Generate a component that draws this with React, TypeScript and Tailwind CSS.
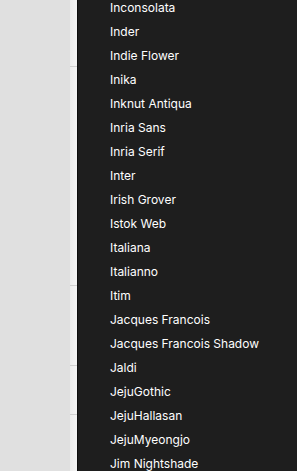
const fonts = [
  'Inconsolata',
  'Inder',
  'Indie Flower',
  'Inika',
  'Inknut Antiqua',
  'Inria Sans',
  'Inria Serif',
  'Inter',
  'Irish Grover',
  'Istok Web',
  'Italiana',
  'Italianno',
  'Itim',
  'Jacques Francois',
  'Jacques Francois Shadow',
  'Jaldi',
  'JejuGothic',
  'JejuHallasan',
  'JejuMyeongjo',
  'Jim Nightshade',
];

export default function App() {
  return (
    <div className="flex h-[471px] w-[297px] overflow-hidden bg-[#e0e0e0] font-['Inter',sans-serif]">
      <div className="w-[70px] shrink-0" />
      <div className="flex w-[7px] shrink-0 flex-col bg-gradient-to-r from-[#ececec] to-[#f4f4f4]">
        <div className="h-[67px] border-b border-[#d0d0d0]" />
        <div className="h-[219px] border-b border-[#d0d0d0]" />
        <div className="h-[80px] border-b border-[#d0d0d0]" />
        <div className="h-[49px] border-b border-[#d0d0d0]" />
      </div>
      <div className="w-px shrink-0 bg-[#0e0e0e]" />
      <div className="flex-1 bg-[#1e1e1e]">
        <ul className="-mt-[4px] pl-[32px]">
          {fonts.map(f => (
            <li key={f} className="flex h-6 items-center text-[12px] text-white">
              {f}
            </li>
          ))}
        </ul>
      </div>
    </div>
  );
}
